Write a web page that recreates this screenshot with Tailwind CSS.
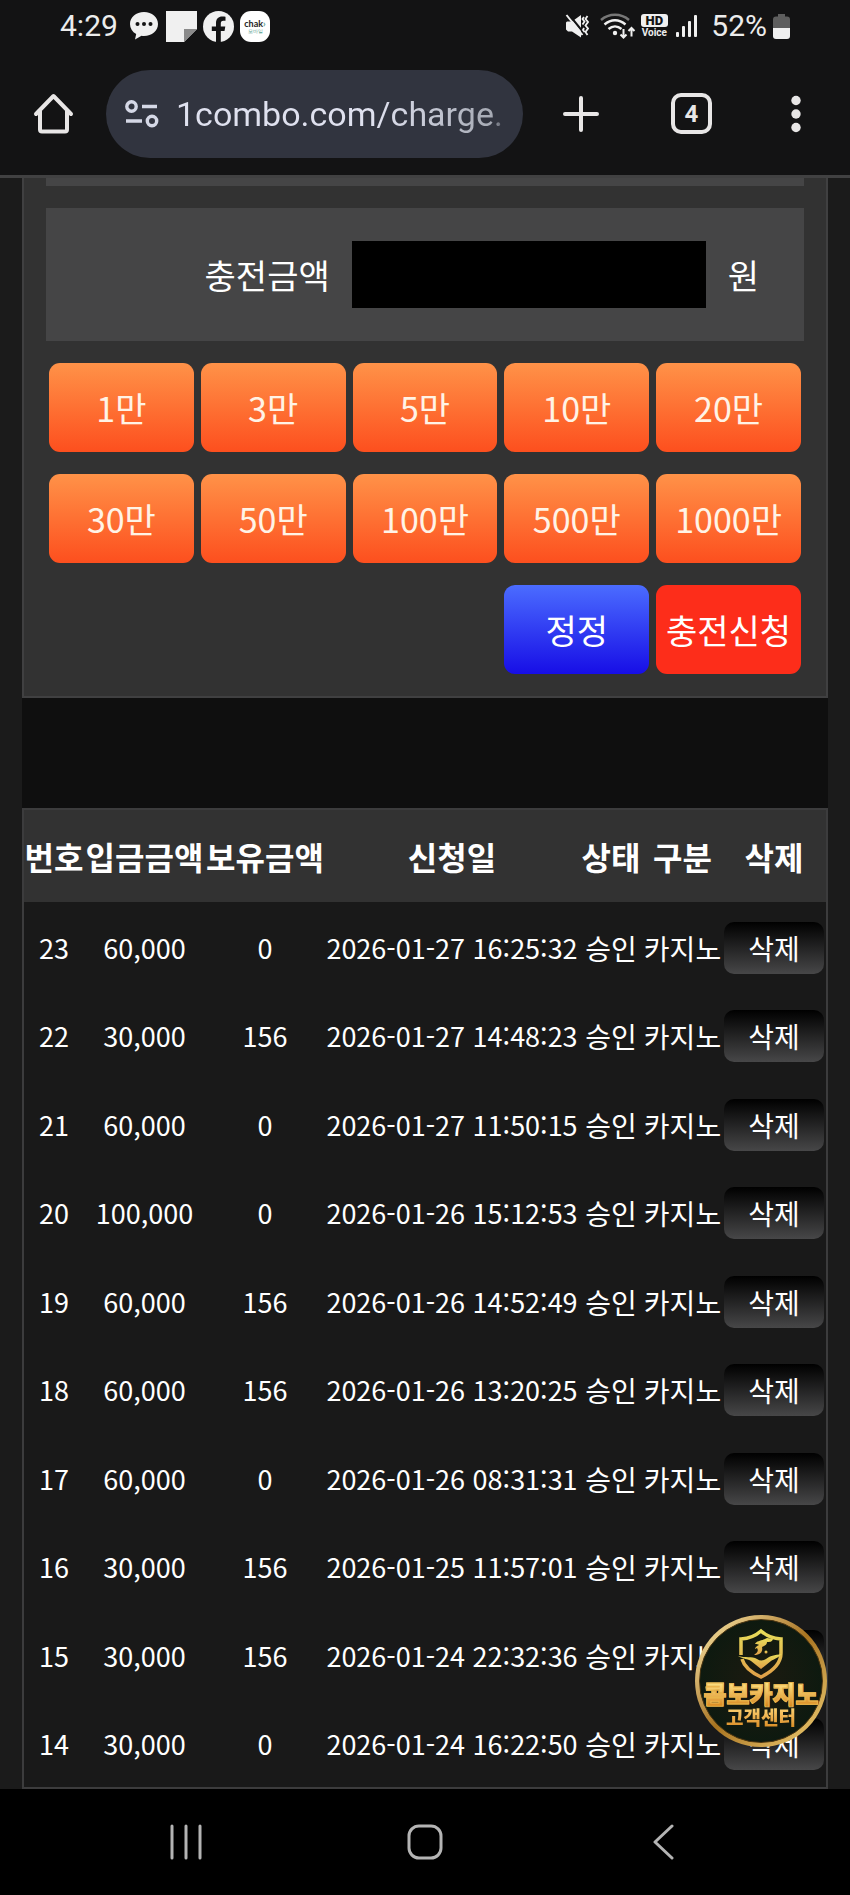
<!DOCTYPE html>
<html lang="ko">
<head>
  <meta charset="UTF-8">
  <meta name="viewport" content="width=device-width, initial-scale=1">
  <title>충전신청</title>
  <script src="https://cdn.jsdelivr.net/npm/@tailwindcss/browser@4"></script>
</head>
<body class="h-screen flex flex-col bg-[#1b1b1b] text-white font-['Noto_Sans_CJK_KR',sans-serif]">

<!-- status bar -->
<div class="h-[52px] shrink-0 flex items-center justify-between bg-[#131314] pl-[60px] pr-[60px] font-[Roboto,sans-serif] text-[30px] leading-[32px] text-[#ececec]">
  <div class="flex items-center">
    <span class="w-[70px]">4:29</span>
    <svg class="w-[28px] h-[28px] mr-2" viewBox="0 0 28 28">
      <path d="M14 0C6 0 0 5.200 0 12c0 4.400 2.300 7.800 6.200 10L5 27.500l6.500-3.800c.8.1 1.600.2 2.500.2 8 0 14-5 14-11.900S22 0 14 0z" fill="#f0f0f0"/>
      <circle cx="7.500" cy="12" r="2" fill="#131314"/><circle cx="14" cy="12" r="2" fill="#131314"/><circle cx="20.500" cy="12" r="2" fill="#131314"/>
    </svg>
    <svg class="w-[31px] h-[31px] mr-1.5" viewBox="0 0 31 31">
      <path d="M0 0h31v18L18 31H0z" fill="#f0f0f0"/><path d="M18 18h13L18 31z" fill="#8a8a8a"/>
    </svg>
    <svg class="w-[31px] h-[31px] mr-1.5" viewBox="0 0 31 31">
      <circle cx="15.500" cy="15.500" r="15.500" fill="#f0f0f0"/>
      <path d="M13 31V20H8.800v-4.600H13v-3.500c0-4.200 2.500-6.500 6.200-6.500 1.600 0 2.900.2 3.300.3v4h-2.100c-2 0-2.600 1.200-2.600 2.700v3h4.500l-.8 4.600h-3.700v11z" fill="#131314"/>
    </svg>
    <span class="w-[30px] h-[31px] rounded-[11px] bg-white flex flex-col items-center justify-center">
      <span class="font-['Lato',sans-serif] font-bold text-[9px] leading-[9px] text-[#222]">chak<span class="text-[#4f9c8c]">›</span></span>
      <span class="text-[5px] leading-[6px] text-[#4f9c8c]">모바일</span>
    </span>
  </div>
  <div class="flex items-center">
    <svg class="w-[24px] h-[24px] mr-[11px]" viewBox="0 0 24 24" fill="none" stroke="#f0f0f0">
      <path d="M1 8.500v7l2 2h4l9 6V1L7 7.500H2z" fill="#f0f0f0" stroke="none"/>
      <path d="M3.500 0l17 21" stroke="#131314" stroke-width="2"/>
      <path d="M1.500 1l16 20" stroke-width="2"/>
      <path d="M19 3l-1.500 2 2 2.500-2 3M22.500 2l-2 3 2.500 3-2.500 3.500 2.500 3-2.500 3.500 2 3M19 14l-1 2 1.500 2" stroke-width="1.800"/>
    </svg>
    <svg class="w-[36px] h-[26px] mr-1" viewBox="0 0 36 26" fill="none" stroke="#f0f0f0" stroke-width="2.400">
      <path d="M1 7c8-7 20-7 28 0" stroke="#777"/>
      <path d="M4.500 11.500c6.500-5.700 14.500-5.700 21 0M8.500 16c4-3.500 9-3.500 13 0"/>
      <circle cx="15" cy="20" r="2.200" fill="#f0f0f0" stroke="none"/>
      <path d="M23.500 16v8.500M20.500 21.500l3 3 3-3M31.500 23.500v-8.500M28.500 18l3-3 3 3" stroke-width="2"/>
    </svg>
    <span class="w-[28px] flex flex-col items-center mr-2">
      <span class="w-[27px] h-[13px] rounded-[3px] bg-[#f0f0f0] text-[#131314] text-[13px] leading-[13px] font-black text-center">HD</span>
      <span class="text-[10px] leading-[11px] font-bold">Voice</span>
    </span>
    <svg class="w-[23px] h-[24px] mr-3" viewBox="0 0 23 24" fill="#f0f0f0">
      <rect x="0" y="18" width="3" height="5" rx="1"/><rect x="6" y="12" width="3" height="11" rx="1"/><rect x="12" y="7" width="3" height="16" rx="1"/><rect x="18" y="1" width="3" height="22" rx="1"/>
    </svg>
    <span class="mr-1.5">52%</span>
    <svg class="w-[17px] h-[25px]" viewBox="0 0 17 25">
      <path d="M5 0h7v2.500h2a3 3 0 0 1 3 3V14H0V5.500a3 3 0 0 1 3-3h2z" fill="#5e5e5e"/>
      <path d="M0 14h17v8a3 3 0 0 1-3 3H3a3 3 0 0 1-3-3z" fill="#f0f0f0"/>
    </svg>
  </div>
</div>

<!-- browser toolbar -->
<header class="h-[126px] shrink-0 flex items-center justify-between bg-[#131314] border-b-[3px] border-[#414142] pl-[33px] pr-[36px]">
  <button type="button" aria-label="홈" class="mr-8">
    <svg class="w-[41px] h-[41px]" viewBox="0 0 41 41" fill="none" stroke="#e8e6e6" stroke-width="4" stroke-linecap="round" stroke-linejoin="round">
      <path d="M3 21L20.500 3 38 21"/><path d="M7 18v18.500a2 2 0 0 0 2 2h23a2 2 0 0 0 2-2V18"/>
    </svg>
  </button>
  <div class="flex-1 min-w-0 h-[88px] rounded-full bg-[#31343f] flex items-center pl-[19px] pr-[14px]">
    <svg class="w-[34px] h-[28px] mr-[17px] shrink-0" viewBox="0 0 34 28" fill="none" stroke="#d5d8e6" stroke-width="3.400">
      <circle cx="6.500" cy="6.500" r="4.700"/><path d="M17 6.500h15M1 21h16"/><circle cx="27" cy="21" r="4.700"/>
    </svg>
    <input type="text" aria-label="주소" value="1combo.com/charge." class="flex-1 min-w-0 bg-linear-to-r from-[#dfe1ef] from-60% via-[#a6aab4] via-95% to-[#31343f] bg-clip-text text-transparent outline-none font-[Roboto,sans-serif] text-[34px] leading-[44px]">
  </div>
  <button type="button" aria-label="새 탭" class="ml-[39px]">
    <svg class="w-[38px] h-[38px]" viewBox="0 0 38 38" stroke="#e8e6e6" stroke-width="4" stroke-linecap="round"><path d="M19 3v32M3 19h32"/></svg>
  </button>
  <button type="button" aria-label="탭 4개" class="ml-[71px] w-[41px] h-[41px] rounded-[10px] border-4 border-[#e8e6e6] flex items-center justify-center font-[Roboto,sans-serif] font-bold text-[24px] leading-[24px] text-[#e8e6e6]">4</button>
  <button type="button" aria-label="메뉴" class="ml-[66px]">
    <svg class="w-[36px] h-[38px]" viewBox="0 0 36 38" fill="#e8e6e6"><circle cx="18" cy="5.500" r="4.700"/><circle cx="18" cy="19" r="4.700"/><circle cx="18" cy="32.500" r="4.700"/></svg>
  </button>
</header>

<!-- page -->
<div class="relative flex-1 min-h-0">
  <main class="h-full overflow-y-auto [scrollbar-width:none] px-[22px]">
    <div class="min-h-full flex flex-col bg-[#0f0f0f]">

      <form class="border-2 border-t-0 border-[#404041] bg-[#323232] px-[22px] pb-[22px]">
        <div class="h-2 bg-[#454546]"></div>
        <div class="mt-[22px] h-[133px] bg-[#454546] flex items-center pr-[45px] text-[34px] leading-[44px]">
          <label for="amount" class="flex-1 text-right mr-[22px]">충전금액</label>
          <input id="amount" type="text" inputmode="numeric" class="w-[354px] h-[67px] bg-black px-3 mr-[22px]">
          <span>원</span>
        </div>
        <div id="amounts" class="mt-[22px] px-[3px] grid grid-cols-5 gap-x-[7px] gap-y-[22px] text-[34px] leading-[44px]">
          <button type="reset" class="order-1 col-start-4 h-[89px] rounded-[11px] bg-linear-to-b/srgb from-[#4b6cff] to-[#170ee6] whitespace-nowrap">정정</button>
          <button type="submit" class="order-1 h-[89px] rounded-[11px] bg-[#fd2d1a] whitespace-nowrap">충전신청</button>
        </div>
      </form>

      <table class="mt-[110px] flex-1 w-full table-fixed border-2 border-[#3c3c3d] border-separate border-spacing-0 bg-[#191919] text-center whitespace-nowrap">
        <colgroup>
          <col class="w-[60px]"><col class="w-[121px]"><col class="w-[120px]"><col class="w-[254px]"><col class="w-[64px]"><col class="w-[79px]"><col class="w-[104px]">
        </colgroup>
        <thead class="bg-[#323232] text-[32px] leading-[40px]">
          <tr class="h-[92px]">
            <th>번호</th><th>입금금액</th><th>보유금액</th><th>신청일</th><th>상태</th><th>구분</th><th>삭제</th>
          </tr>
        </thead>
        <tbody id="list" class="text-[28px] leading-[40px]"></tbody>
      </table>
    </div>
  </main>

  <!-- customer center button -->
  <a href="#" class="absolute right-[23px] bottom-[42px] w-[132px] h-[132px] rounded-full bg-linear-to-br from-[#fff0b0] via-[#a8741f] to-[#f3d377] p-1">
    <span class="h-full rounded-full bg-radial from-[#1c1a10] to-[#06190f] border border-[#4a3410] flex flex-col items-center pt-2">
      <svg class="w-[46px] h-[51px]" viewBox="0 0 46 51" fill="none">
        <defs><linearGradient id="gold" x1="0" y1="0" x2="0" y2="1"><stop offset="0" stop-color="#e8dc5a"/><stop offset="1" stop-color="#e0a048"/></linearGradient></defs>
        <path d="M3 27V11c8-.5 15-3.500 20-8 5 4.500 12 7.500 20 8v14c0 11-8 18-20 24C12 44 6 38 4 31" stroke="url(#gold)" stroke-width="3.500"/>
        <path d="M0 28c5 3 10 3 13 5l10 8 10-8c3-2 7-3 11-7-8 1-12 2-16 5-3 2-6 2-9 0-5-3-12-1-19-3z" fill="url(#gold)"/>
        <path d="M17 16c2-4 7-3 12-6l6 1c-1 3-3 3-6 3 0 3-3 4-5 5 1 4-1 8-8 8 3-2 5-4 3-7l-2 1c0-2 2-3 4-4-1-1-2-1-4-1z" fill="url(#gold)"/>
        <circle cx="28" cy="24" r="1.500" fill="url(#gold)"/>
      </svg>
      <span class="mt-0.5 text-[25px] leading-[25px] font-black whitespace-nowrap bg-linear-to-b from-[#ffe98a] to-[#d98a1e] bg-clip-text text-transparent [-webkit-text-stroke:1px_#eab54c]">콤보카지노</span>
      <span class="text-[19px] leading-[22px] font-black whitespace-nowrap bg-linear-to-b from-[#ffd978] to-[#d98a1e] bg-clip-text text-transparent">고객센터</span>
    </span>
  </a>
</div>

<!-- android navigation -->
<nav class="h-[106px] shrink-0 bg-black grid grid-cols-[372fr_106fr_372fr] items-center">
  <button type="button" aria-label="최근 앱" class="flex justify-center">
    <svg class="w-[32px] h-[36px]" viewBox="0 0 32 36" stroke="#b4b4b4" stroke-width="3" stroke-linecap="round"><path d="M2 2v32M16 2v32M30 2v32"/></svg>
  </button>
  <button type="button" aria-label="홈 화면" class="flex justify-center">
    <svg class="w-[36px] h-[36px]" viewBox="0 0 36 36" fill="none" stroke="#b4b4b4" stroke-width="3"><rect x="2" y="2" width="32" height="32" rx="10"/></svg>
  </button>
  <button type="button" aria-label="뒤로" class="flex justify-center">
    <svg class="w-[22px] h-[36px]" viewBox="0 0 22 36" fill="none" stroke="#b4b4b4" stroke-width="3" stroke-linecap="round" stroke-linejoin="round"><path d="M19 2L2 18l17 16"/></svg>
  </button>
</nav>

<script>
  const amounts = ["1만", "3만", "5만", "10만", "20만", "30만", "50만", "100만", "500만", "1000만"];
  const rows = [
    [23, "60,000", 0, "2026-01-27 16:25:32"],
    [22, "30,000", 156, "2026-01-27 14:48:23"],
    [21, "60,000", 0, "2026-01-27 11:50:15"],
    [20, "100,000", 0, "2026-01-26 15:12:53"],
    [19, "60,000", 156, "2026-01-26 14:52:49"],
    [18, "60,000", 156, "2026-01-26 13:20:25"],
    [17, "60,000", 0, "2026-01-26 08:31:31"],
    [16, "30,000", 156, "2026-01-25 11:57:01"],
    [15, "30,000", 156, "2026-01-24 22:32:36"],
    [14, "30,000", 0, "2026-01-24 16:22:50"]
  ];

  document.getElementById("amounts").insertAdjacentHTML("afterbegin", amounts.map(a => `
    <button type="button" class="h-[89px] rounded-[11px] bg-linear-to-b/srgb from-[#ff9248] to-[#fd4f1e] text-[#fff3e6] whitespace-nowrap">${a}</button>`).join(""));

  document.getElementById("list").innerHTML = rows.map(r => `
    <tr class="h-[88px]">
      <td class="text-[27px] pt-[3px]">${r[0]}</td>
      <td class="text-[27px] pt-[3px]">${r[1]}</td>
      <td class="text-[27px] pt-[3px]">${r[2]}</td>
      <td class="text-[27px] pt-[3px]">${r[3]}</td>
      <td class="pt-[3px]">승인</td>
      <td class="pt-[3px]">카지노</td>
      <td class="pt-[3px]"><button type="button" class="block mx-auto w-[100px] h-[52px] rounded-[10px] bg-linear-to-b/srgb from-black to-[#474748]">삭제</button></td>
    </tr>`).join("");
</script>
</body>
</html>
